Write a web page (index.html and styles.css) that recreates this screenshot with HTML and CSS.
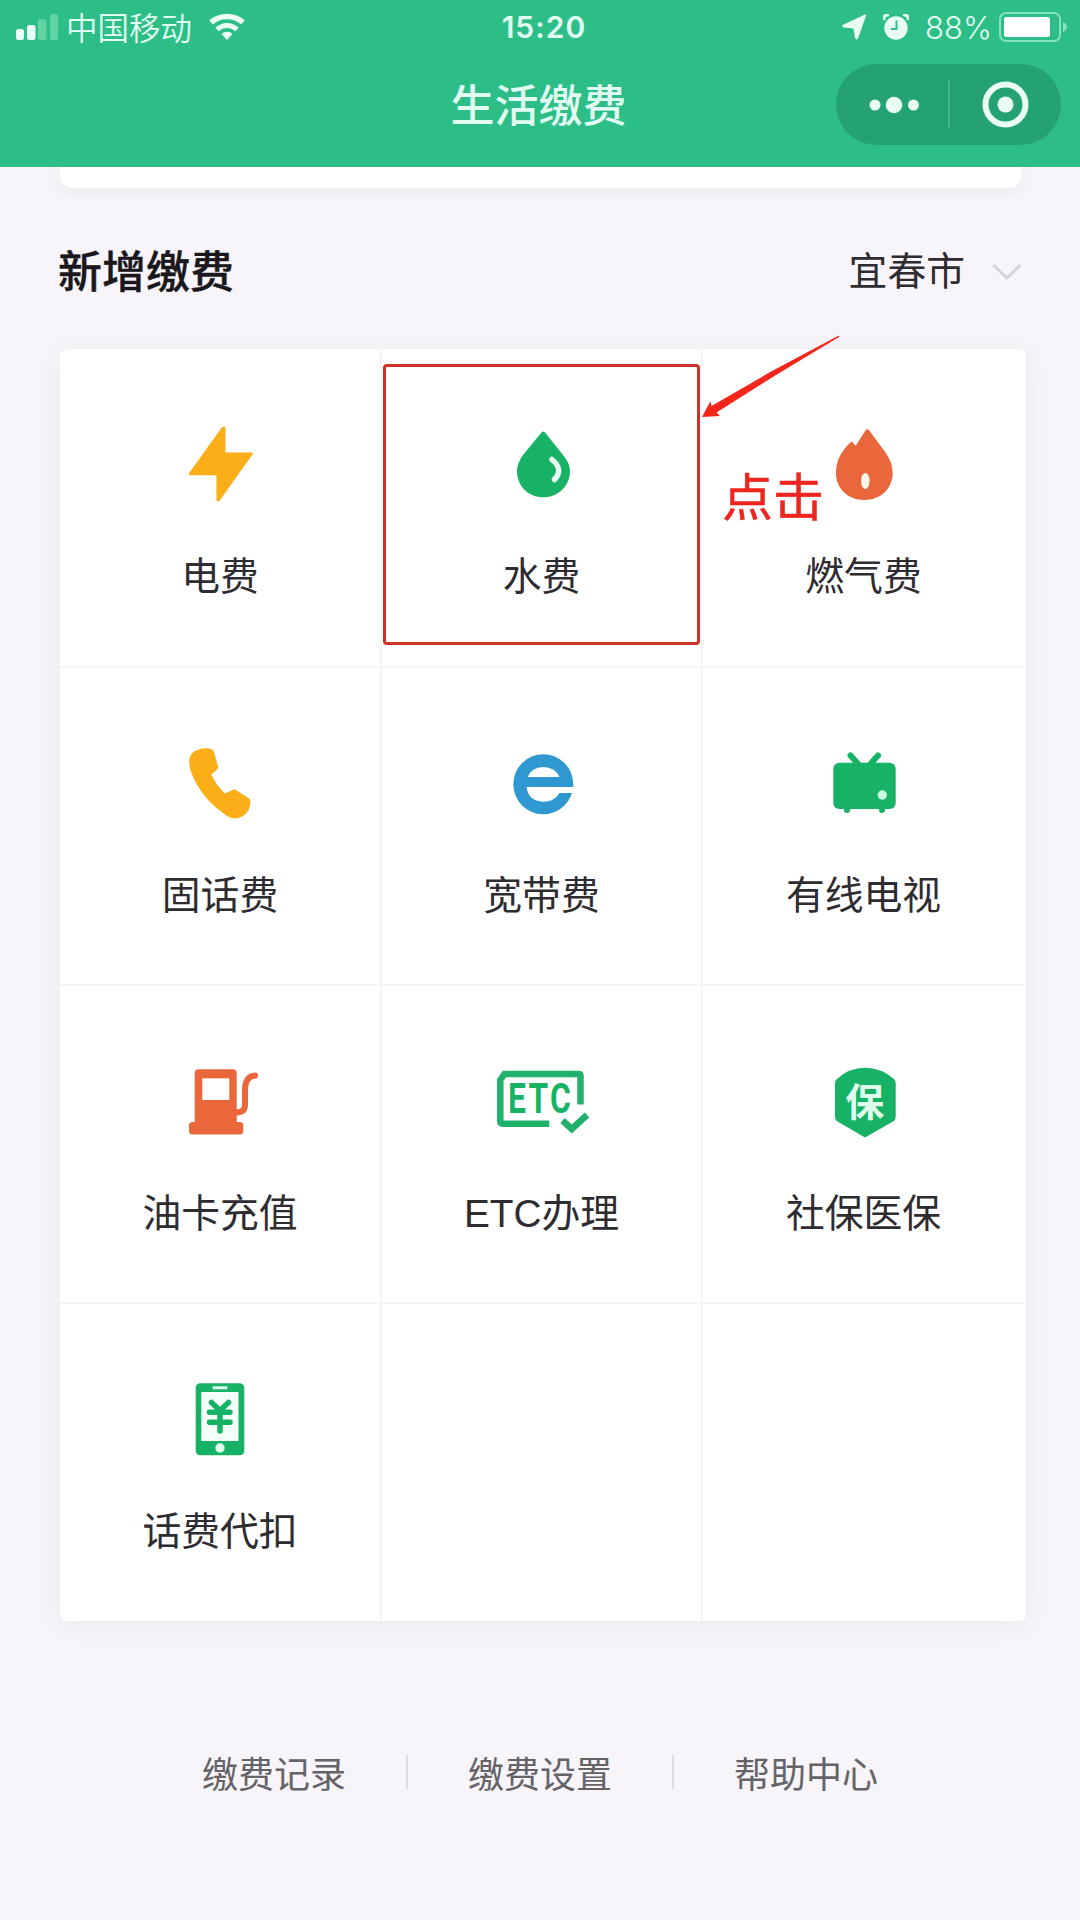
FILE: index.html
```html
<!DOCTYPE html>
<html lang="zh-CN">
<head>
    <meta charset="UTF-8">
    <meta name="viewport" content="width=device-width, initial-scale=1.0">
    <title>生活缴费</title>
    <link rel="stylesheet" href="styles.css">
</head>
<body>
    <header class="header">
        <div class="status-bar">
            <div class="status-left">
                <svg class="signal" width="43" height="26" viewBox="0 0 43 26">
                    <rect x="0" y="15" width="8" height="11" rx="2.5"/>
                    <rect x="11" y="11" width="8.5" height="15" rx="2.5"/>
                    <rect class="dim" x="22" y="5" width="8.5" height="21" rx="2.5"/>
                    <rect class="dim" x="34" y="0" width="8" height="26" rx="2.5"/>
                </svg>
                <span class="carrier">中国移动</span>
                <svg class="wifi" width="38" height="28" viewBox="0 0 38 28">
                    <path d="M3 9.5C12 1.5 26 1.5 35 9.5" fill="none" stroke="#e9fff6" stroke-width="5.5"/>
                    <path d="M9 16.5C15 11 23 11 29 16.5" fill="none" stroke="#e9fff6" stroke-width="5"/>
                    <path d="M13.5 21C17 18 21 18 24.5 21L19 27Z"/>
                </svg>
            </div>
            <span class="time">15:20</span>
            <div class="status-right">
                <svg width="25" height="26" viewBox="0 0 25 26">
                    <path d="M0.5 11L23 0.5Q24.5 0 24.2 1.5L16 24.5Q14.5 26.5 13 24L11.5 14.5L2 13.5Q-0.5 13 0.5 11Z"/>
                </svg>
                <svg class="alarm" width="26" height="26" viewBox="0 0 26 26">
                    <circle cx="13" cy="14" r="11.7"/>
                    <path d="M1 6Q0 1 6 0.5M25 6Q26 1 20 0.5" fill="none" stroke="#e9fff6" stroke-width="3"/>
                    <path d="M13.5 6.5V15H8" fill="none" stroke="#2dbd87" stroke-width="2"/>
                </svg>
                <span class="percent">88%</span>
                <svg class="battery" width="69" height="30" viewBox="0 0 69 30">
                    <rect x="1" y="1" width="60" height="28" rx="6" fill="none" stroke="#85e3bd" stroke-width="2"/>
                    <rect x="5" y="5" width="46" height="20" rx="2.5" fill="#fff"/>
                    <path d="M64 10Q68 12 68 15Q68 18 64 20Z" fill="#85e3bd"/>
                </svg>
            </div>
        </div>
        <div class="nav-bar">
            <h1>生活缴费</h1>
            <div class="capsule">
                <svg width="225" height="81" viewBox="0 0 225 81">
                    <circle cx="39" cy="41" r="5.5"/>
                    <circle cx="58" cy="41" r="8.3"/>
                    <circle cx="77.5" cy="41" r="5.5"/>
                    <path d="M113 16V64" stroke="#55b98f" stroke-width="1.5"/>
                    <circle cx="169.5" cy="40.5" r="20" fill="none" stroke="#e9fff6" stroke-width="6"/>
                    <circle cx="169.5" cy="40.5" r="8"/>
                </svg>
            </div>
        </div>
    </header>

    <main class="content">
        <div class="prev-card"></div>

        <div class="section-head">
            <h2>新增缴费</h2>
            <div class="city">
                <span>宜春市</span>
                <svg width="30" height="18" viewBox="0 0 30 18">
                    <path d="M1.5 2L15 15L28.5 2" fill="none" stroke="#d6d4d8" stroke-width="3"/>
                </svg>
            </div>
        </div>

        <div class="grid">
            <div class="cell">
                <svg class="icon yellow" viewBox="0 0 120 100">
                    <path d="M63 14L64.2 14V39.7H91.5L58.5 86H57.7V60H30Z" stroke="#fbae17" stroke-width="2.5" stroke-linejoin="round"/>
                </svg>
                <span class="label">电费</span>
            </div>
            <div class="cell">
                <svg class="icon green" viewBox="0 0 120 100">
                    <path d="M59.5 18.5Q61.3 16.3 63.1 18.5L81 41C85 46 88 51 88 57C88 72 76 83.3 61.3 83.3C46.5 83.3 35 72 35 57C35 51 37.5 46 41 41Z"/>
                    <path d="M70 45.500Q82 55.500 72.5 65.5" fill="none" stroke="#e9fff6" stroke-width="5.5" stroke-linecap="round"/>
                </svg>
                <span class="label">水费</span>
                <div class="mark-box"></div>
                <svg class="mark-arrow" width="140" height="84" viewBox="0 0 140 84">
                    <path d="M0 82L8.5 66L9.5 71L70 36L135 1.5Q138 0 137 2L74 40L14.500 77.5L18 81Z"/>
                </svg>
                <span class="mark-text">点击</span>
            </div>
            <div class="cell">
                <svg class="icon orange" viewBox="0 0 120 100">
                    <path d="M61.5 16.5Q63.3 14 65.3 16.5L80 36.5C85.5 44 88.7 51 88.7 59C88.7 75 76 86 60.5 86C44.5 86 32 75 32 59C32 46 38 37 46 28.8Q48.3 27 49.5 29.5L51.7 31.7Z"/>
                    <ellipse cx="61.3" cy="67" rx="4.3" ry="8" fill="#fff5ea"/>
                </svg>
                <span class="label">燃气费</span>
            </div>

            <div class="cell">
                <svg class="icon yellow" viewBox="0 0 120 100">
                    <path d="M39 16.5C44 15 48 15 51 16Q53.5 16.5 54 19L58 33Q58.5 35.5 56.5 37L51.3 41.5Q56 52 65 60.5L72.5 57Q74.5 56 76.5 57.5L88.5 65Q90.5 66.5 90.5 69C90 74 89 77 86.5 80C81 86 74 87 67 83C51 72 41 60 34 46C30 37 28.5 31 29.5 25C31 20.5 34 17.8 39 16.5Z"/>
                </svg>
                <span class="label">固话费</span>
            </div>
            <div class="cell">
                <svg class="icon blue" viewBox="0 0 120 100">
                    <circle cx="61.3" cy="51.3" r="30"/>
                    <path d="M45.7 44Q50 34 61.3 34Q73 34 77.5 44Z" fill="#fff"/>
                    <path d="M44.7 54H93V60H77.5Q72 68.7 61.3 68.7Q46 68 44.7 54Z" fill="#fff"/>
                </svg>
                <span class="label">宽带费</span>
            </div>
            <div class="cell">
                <svg class="icon green" viewBox="0 0 120 100">
                    <path d="M46.5 22.5L55 32M74 22.5L65.5 32" stroke="#18b267" stroke-width="6" stroke-linecap="round"/>
                    <path d="M43 75V77M78 75V77" stroke="#18b267" stroke-width="6" stroke-linecap="round"/>
                    <rect x="29.3" y="29.7" width="62.4" height="46.3" rx="6"/>
                    <circle cx="78.3" cy="62" r="4.7" fill="#caffdf"/>
                </svg>
                <span class="label">有线电视</span>
            </div>

            <div class="cell">
                <svg class="icon orange" viewBox="0 0 120 100">
                    <rect x="34.7" y="18.3" width="42" height="60" rx="4"/>
                    <rect x="29" y="71" width="54.3" height="12.5" rx="3.5"/>
                    <rect x="42.3" y="27.3" width="27" height="21.7" fill="#fff"/>
                    <path d="M76 61.5Q85 61.5 85 54V40Q85 25 95 24.5" fill="none" stroke="#ea663b" stroke-width="6" stroke-linecap="round"/>
                </svg>
                <span class="label">油卡充值</span>
            </div>
            <div class="cell">
                <svg class="icon green" viewBox="0 0 120 100">
                    <path d="M98.5 53.5V25Q98.5 23 96.5 23H22.5L18.3 29V70Q18.3 72.7 21 72.7H67.3" fill="none" stroke="#20b26b" stroke-width="6.5"/>
                    <path d="M80.5 69.5L89.8 78L105 64" fill="none" stroke="#20b26b" stroke-width="6.5"/>
                    <text class="etc" x="26" y="62" textLength="65" lengthAdjust="spacingAndGlyphs">ETC</text>
                </svg>
                <span class="label">ETC办理</span>
            </div>
            <div class="cell">
                <svg class="icon green" viewBox="0 0 120 100">
                    <path d="M31 32Q31 29.5 33 28Q45 16.7 61 16.7Q77 16.7 90 28Q91.7 29.5 91.7 32V66Q91.7 69 89 70.5L61 86.5L33.5 70.5Q31 69 31 66Z"/>
                    <text class="bao" x="60.7" y="64.5">保</text>
                </svg>
                <span class="label">社保医保</span>
            </div>

            <div class="cell">
                <svg class="icon green" viewBox="0 0 120 100">
                    <rect x="35.7" y="14.3" width="48.6" height="72" rx="4.5"/>
                    <rect x="41.3" y="23" width="37.2" height="49" fill="#f4fff9"/>
                    <rect x="52.7" y="17.3" width="14.6" height="3" fill="#dfffee"/>
                    <circle cx="60" cy="79" r="4.7" fill="#dfffee"/>
                    <!-- yuan mark -->
                    <path d="M51.5 33.5L60 41.5L68.5 33.5M60 41.5V62M49.5 43.3H70M49.5 53.3H70" fill="none" stroke="#18b267" stroke-width="5.5" stroke-linecap="round"/>
                </svg>
                <span class="label">话费代扣</span>
            </div>
            <div class="cell"></div>
            <div class="cell"></div>
        </div>
    </main>

    <footer class="footer">
        <span>缴费记录</span>
        <i class="divider"></i>
        <span>缴费设置</span>
        <i class="divider"></i>
        <span>帮助中心</span>
    </footer>
</body>
</html>
```
FILE: styles.css
```css
* {
    box-sizing: border-box;
}

body {
    margin: 0;
    min-height: 1920px;
    background: #f7f5f9;
    font-family: "Noto Sans CJK SC", "Liberation Sans", sans-serif;
    color: #2e2c30;
}

svg {
    display: block;
    flex: none;
}

h1, h2 {
    margin: 0;
    font-size: 44px;
    line-height: 60px;
}

/* header */
.header {
    height: 167px;
    background: #2dbd87;
    color: #e0fff2;
    fill: #e9fff6;
}

.status-bar {
    display: grid;
    grid-template-columns: 1fr auto 1fr;
    align-items: center;
    height: 54px;
    padding: 0 12px 0 16px;
}

.status-left,
.status-right {
    display: flex;
    align-items: center;
}

.status-right {
    justify-content: flex-end;
}

.signal .dim {
    fill: #62d3a5;
}

.carrier {
    margin: -3px 16px 0 7px;
    font-size: 31.5px;
    font-weight: 350;
    line-height: 40px;
}

.time {
    padding-left: 4px;
    font-family: Inter, sans-serif;
    font-size: 30px;
    font-weight: 600;
    letter-spacing: 1px;
}

.alarm {
    margin-left: 16px;
}

.percent {
    margin: 0 7px 0 16px;
    font-family: Inter, sans-serif;
    font-size: 31px;
    font-weight: 300;
}

.nav-bar {
    display: grid;
    grid-template-columns: 1fr auto 1fr;
    align-items: center;
    height: 101px;
    padding-right: 19px;
}

.nav-bar h1 {
    grid-column: 2;
    padding: 0 0 4px 16px;
    font-weight: 500;
}

.capsule {
    justify-self: end;
    border-radius: 41px;
    background: #25a273;
}

/* content */
.content {
    padding: 0 54px 0 60px;
}

.prev-card {
    height: 21px;
    margin-right: 5px;
    border-radius: 0 0 12px 12px;
    background: #fff;
    box-shadow: 0 4px 14px rgba(60, 50, 70, 0.06);
}

.section-head {
    display: flex;
    justify-content: space-between;
    align-items: center;
    height: 161px;
    padding: 1px 4px 0 0;
}

.section-head h2 {
    margin-left: -2px;
    font-weight: 500;
    color: #1a181c;
    -webkit-text-stroke: 0.4px #1a181c;
}

.city {
    display: flex;
    align-items: center;
    gap: 27px;
    font-size: 38.8px;
    line-height: 58px;
}

.city span {
    margin-top: -3px;
}

.city svg {
    margin-top: 6px;
}

.grid {
    display: grid;
    grid-template-columns: 322px 321px 323px;
    grid-template-rows: 319px 318px 318px 317px;
    border-radius: 7px;
    background: #fff;
    box-shadow: 0 4px 24px rgba(60, 50, 70, 0.06);
}

.cell {
    position: relative;
    display: flex;
    flex-direction: column;
    align-items: center;
    padding-top: 65px;
    border-right: 2px solid #f7f4f8;
    border-bottom: 2px solid #f7f4f8;
}

.cell:nth-child(3n) {
    padding-right: 2px;
    border-right: 0;
}

.cell:nth-child(n+10) {
    border-bottom: 0;
}

.icon {
    width: 120px;
    height: 100px;
}

.label {
    margin-top: 34px;
    font-family: "Liberation Sans", "Noto Sans CJK SC", sans-serif;
    font-size: 38.8px;
    line-height: 58px;
}

.yellow { fill: #fbae17; }
.green { fill: #18b267; }
.orange { fill: #ea663b; }
.blue { fill: #3098d1; }

.etc {
    font-family: Roboto, "Liberation Sans", sans-serif;
    font-size: 42px;
    font-weight: 700;
    letter-spacing: 3px;
}

.bao {
    font-size: 39px;
    font-weight: 700;
    text-anchor: middle;
    fill: #dfffec;
}

/* red pointer over the water bill */
.mark-box {
    position: absolute;
    top: 15px;
    left: 1px;
    width: 317px;
    height: 281px;
    border: 3px solid #cc3229;
    border-radius: 4px;
}

.mark-arrow {
    position: absolute;
    top: -14px;
    left: 320px;
    z-index: 1;
    fill: #f3261c;
}

.mark-text {
    position: absolute;
    top: 110px;
    left: 340px;
    z-index: 1;
    font-size: 51px;
    line-height: 70px;
    white-space: nowrap;
    color: #ee251f;
    -webkit-text-stroke: 0.5px #ee251f;
}

/* footer */
.footer {
    display: flex;
    justify-content: center;
    align-items: center;
    gap: 60px;
    margin-top: 121px;
    font-size: 36px;
    line-height: 60px;
    color: #656367;
}

.divider {
    width: 2px;
    height: 34px;
    background: #dedce0;
}
```
